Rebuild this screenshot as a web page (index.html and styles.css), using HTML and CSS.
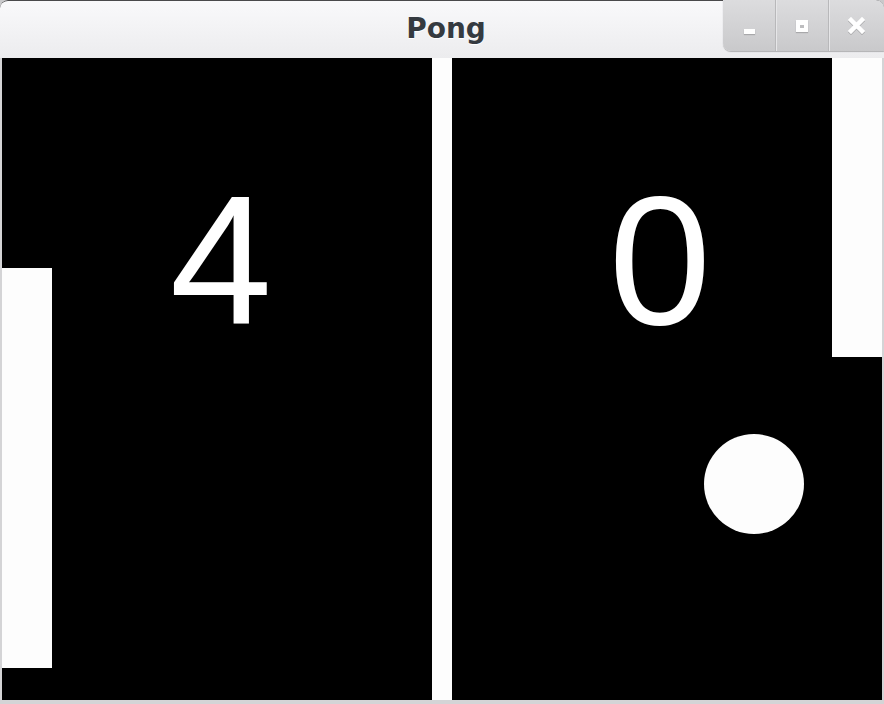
FILE: index.html
```html
<!DOCTYPE html>
<html>
<head>
<meta charset="utf-8">
<title>Pong</title>
<link rel="stylesheet" href="styles.css">
</head>
<body>
<div class="window">
  <div class="titlebar">
    <div class="title">Pong</div>
    <div class="buttons">
      <div class="btn"><span class="ic-min"></span></div>
      <div class="btn"><span class="ic-max"></span></div>
      <div class="btn">
        <svg width="17" height="17" viewBox="0 0 17 17"><path d="M3 3 L14 14 M14 3 L3 14" stroke="#fff" stroke-width="4.5" stroke-linecap="square"/></svg>
      </div>
    </div>
  </div>
  <div class="game">
    <div class="paddle left"></div>
    <div class="net"></div>
    <div class="paddle right"></div>
    <div class="score s1">4</div>
    <div class="score s2">0</div>
    <div class="ball"></div>
  </div>
</div>
</body>
</html>
```
FILE: styles.css
```css
html, body { margin: 0; padding: 0; background: #c9c9cb; }
.window {
  width: 884px;
  height: 704px;
  box-sizing: border-box;
  background: #d4d4d6;
  border-radius: 8px 8px 0 0;
  overflow: hidden;
  display: flex;
  flex-direction: column;
}
.titlebar {
  height: 58px;
  flex: none;
  box-sizing: border-box;
  border-top: 1px solid #4a4a4c;
  background: linear-gradient(#f9f9fb, #ececee);
  border-radius: 8px 8px 0 0;
  display: flex;
  justify-content: center;
  position: relative;
}
.title {
  font-family: "DejaVu Sans", sans-serif;
  font-weight: bold;
  font-size: 28px;
  color: #353a40;
  line-height: 56px;
  padding-left: 8px;
  text-shadow: 0 1px 0 #fff;
}
.buttons {
  position: absolute;
  right: 0;
  top: -1px;
  height: 51px;
  display: flex;
  border-radius: 0 8px 0 8px;
  overflow: hidden;
  background: linear-gradient(#dcdcde, #c9c9cb);
  box-shadow: 0 1px 1px #b0b0b2;
}
.btn {
  width: 52px;
  height: 51px;
  display: flex;
  align-items: center;
  justify-content: center;
  border-left: 1px solid #b8b8ba;
  box-shadow: inset 1px 0 0 #e6e6e8;
}
.btn:first-child { border-left: none; box-shadow: none; }
.btn:last-child { width: 55px; }
.ic-min {
  width: 11px;
  height: 5px;
  background: #fff;
  margin-top: 12px;
  box-shadow: 0 1px 1px #a8a8aa;
}
.ic-max {
  width: 4px;
  height: 3px;
  border: 4px solid #fff;
  border-top-width: 5px;
  background: #bdbdbf;
  box-shadow: 0 1px 1px #a8a8aa;
}
.btn svg { filter: drop-shadow(0 1px 0 #a8a8aa); }
.game {
  position: relative;
  margin: 0 2px;
  height: 642px;
  background: #000;
  overflow: hidden;
}
.paddle, .net, .ball { position: absolute; background: #fdfdfd; }
.paddle.left { left: 0; top: 210px; width: 50px; height: 400px; }
.paddle.right { left: 830px; top: 0; width: 50px; height: 299px; }
.net { left: 430px; top: 0; width: 20px; height: 642px; }
.ball { left: 702px; top: 376px; width: 100px; height: 100px; border-radius: 50%; }
.score {
  position: absolute;
  width: 200px;
  text-align: center;
  font-family: "Liberation Sans", Arial, sans-serif;
  font-size: 184px;
  line-height: 1;
  color: #fff;
  top: 110px;
}
.s1 { left: 119px; }
.s2 { left: 558px; }
```
